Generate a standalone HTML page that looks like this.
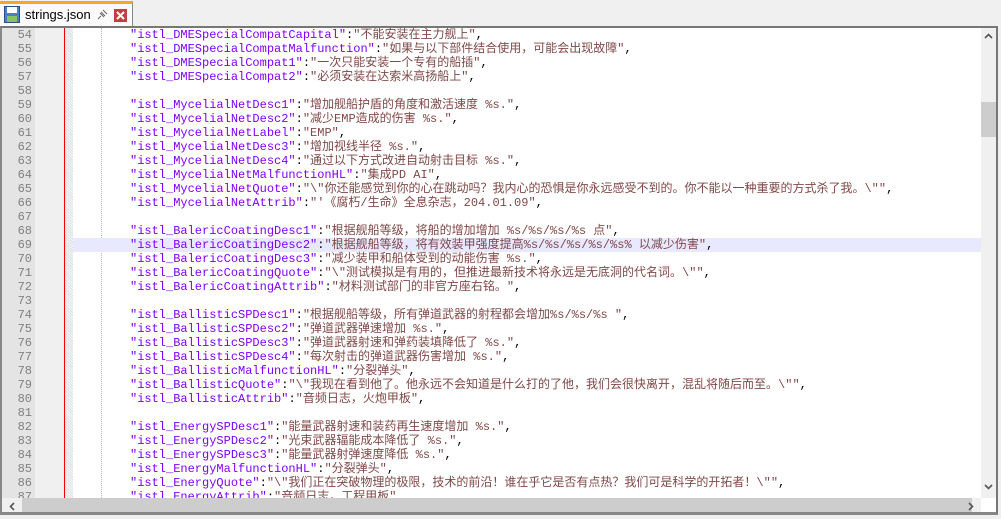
<!DOCTYPE html>
<html><head><meta charset="utf-8"><style>
body{margin:0;width:1001px;height:519px;background:#f0f0f0;overflow:hidden;position:relative;font-family:"Liberation Sans",sans-serif}
.tab{position:absolute;left:0;top:1px;width:133px;height:25px;background:#fafafa;border-right:1px solid #888;border-top:3px solid #f5a623;box-sizing:border-box}
.tab .t{position:absolute;left:25px;top:3px;font-size:13px;color:#000}
.ed{position:absolute;left:0;top:26px;width:998px;height:489px;border-top:2px solid #777;border-left:2px solid #888;border-right:2px solid #777;border-bottom:3px solid #888;box-sizing:border-box;background:#fff;overflow:hidden}
.num{position:absolute;left:0;top:0;width:33px;height:480px;background:#e4e4e4}
.num2{position:absolute;left:33px;top:0;width:29px;height:480px;background:#f0f0f0}
.red{position:absolute;left:62px;top:0;width:1px;height:480px;background:#e00}
.hatch{position:absolute;left:63px;top:0;width:8px;height:480px;background:repeating-linear-gradient(45deg,#f6f6f6 0 1px,#e0e0e0 1px 2px)}
.guide{position:absolute;left:99px;top:0;width:0;height:480px;border-left:1px dotted #bbb}
.l{position:absolute;left:0;height:14px;width:980px;font:12px/14px "Liberation Mono","Noto Sans CJK SC",monospace;white-space:pre}
.l .n{position:absolute;left:0;width:30px;text-align:right;color:#808080}
.l .c{position:absolute;left:128px}
.k{color:#8000ff}.s{color:#804848}
.hl{background:#e8e8ff}
.vs{position:absolute;left:979px;top:0;width:15px;height:470px;background:#f0f0f0}
.hs{position:absolute;left:0;top:470px;width:979px;height:16px;background:#f0f0f0}
</style></head><body>
<div class="tab"><svg style="position:absolute;left:4px;top:2px" width="16" height="17"><rect x="0.5" y="0.5" width="15" height="16" fill="#4a7fc8" stroke="#2a4f90"/><rect x="3" y="1" width="10" height="6" fill="#fff"/><rect x="3" y="10" width="10" height="6" fill="#8ac060"/></svg><span class="t">strings.json</span>
<svg style="position:absolute;left:96px;top:5px" width="12" height="12"><path d="M2 10L5 7M4 4L8 8M5 3L9 7M7 1L11 5" stroke="#666" fill="none"/></svg>
<svg style="position:absolute;left:114px;top:5px" width="13" height="13"><rect width="13" height="13" fill="#c04040"/><path d="M3 3L10 10M10 3L3 10" stroke="#fff" stroke-width="2"/></svg></div>
<div class="ed">
<div class="num"></div><div class="num2"></div><div class="red"></div><div class="hatch"></div><div class="guide"></div>
<div class="l" style="top:0"><span class="n">54</span><span class="c"><span class="k">"istl_DMESpecialCompatCapital"</span>:<span class="s">"不能安装在主力舰上"</span>,</span></div>
<div class="l" style="top:14px"><span class="n">55</span><span class="c"><span class="k">"istl_DMESpecialCompatMalfunction"</span>:<span class="s">"如果与以下部件结合使用，可能会出现故障"</span>,</span></div>
<div class="l" style="top:28px"><span class="n">56</span><span class="c"><span class="k">"istl_DMESpecialCompat1"</span>:<span class="s">"一次只能安装一个专有的船插"</span>,</span></div>
<div class="l" style="top:42px"><span class="n">57</span><span class="c"><span class="k">"istl_DMESpecialCompat2"</span>:<span class="s">"必须安装在达索米高扬船上"</span>,</span></div>
<div class="l" style="top:56px"><span class="n">58</span></div>
<div class="l" style="top:70px"><span class="n">59</span><span class="c"><span class="k">"istl_MycelialNetDesc1"</span>:<span class="s">"增加舰船护盾的角度和激活速度 %s."</span>,</span></div>
<div class="l" style="top:84px"><span class="n">60</span><span class="c"><span class="k">"istl_MycelialNetDesc2"</span>:<span class="s">"减少EMP造成的伤害 %s."</span>,</span></div>
<div class="l" style="top:98px"><span class="n">61</span><span class="c"><span class="k">"istl_MycelialNetLabel"</span>:<span class="s">"EMP"</span>,</span></div>
<div class="l" style="top:112px"><span class="n">62</span><span class="c"><span class="k">"istl_MycelialNetDesc3"</span>:<span class="s">"增加视线半径 %s."</span>,</span></div>
<div class="l" style="top:126px"><span class="n">63</span><span class="c"><span class="k">"istl_MycelialNetDesc4"</span>:<span class="s">"通过以下方式改进自动射击目标 %s."</span>,</span></div>
<div class="l" style="top:140px"><span class="n">64</span><span class="c"><span class="k">"istl_MycelialNetMalfunctionHL"</span>:<span class="s">"集成PD AI"</span>,</span></div>
<div class="l" style="top:154px"><span class="n">65</span><span class="c"><span class="k">"istl_MycelialNetQuote"</span>:<span class="s">"\"你还能感觉到你的心在跳动吗？我内心的恐惧是你永远感受不到的。你不能以一种重要的方式杀了我。\""</span>,</span></div>
<div class="l" style="top:168px"><span class="n">66</span><span class="c"><span class="k">"istl_MycelialNetAttrib"</span>:<span class="s">"'《腐朽/生命》全息杂志，204.01.09"</span>,</span></div>
<div class="l" style="top:182px"><span class="n">67</span></div>
<div class="l" style="top:196px"><span class="n">68</span><span class="c"><span class="k">"istl_BalericCoatingDesc1"</span>:<span class="s">"根据舰船等级，将船的增加增加 %s/%s/%s/%s 点"</span>,</span></div>
<div class="l hl" style="top:210px;left:71px;width:908px"></div>
<div class="l" style="top:210px"><span class="n">69</span><span class="c"><span class="k">"istl_BalericCoatingDesc2"</span>:<span class="s">"根据舰船等级，将有效装甲强度提高%s/%s/%s/%s/%s% 以减少伤害"</span>,</span></div>
<div class="l" style="top:224px"><span class="n">70</span><span class="c"><span class="k">"istl_BalericCoatingDesc3"</span>:<span class="s">"减少装甲和船体受到的动能伤害 %s."</span>,</span></div>
<div class="l" style="top:238px"><span class="n">71</span><span class="c"><span class="k">"istl_BalericCoatingQuote"</span>:<span class="s">"\"测试模拟是有用的，但推进最新技术将永远是无底洞的代名词。\""</span>,</span></div>
<div class="l" style="top:252px"><span class="n">72</span><span class="c"><span class="k">"istl_BalericCoatingAttrib"</span>:<span class="s">"材料测试部门的非官方座右铭。"</span>,</span></div>
<div class="l" style="top:266px"><span class="n">73</span></div>
<div class="l" style="top:280px"><span class="n">74</span><span class="c"><span class="k">"istl_BallisticSPDesc1"</span>:<span class="s">"根据舰船等级，所有弹道武器的射程都会增加%s/%s/%s "</span>,</span></div>
<div class="l" style="top:294px"><span class="n">75</span><span class="c"><span class="k">"istl_BallisticSPDesc2"</span>:<span class="s">"弹道武器弹速增加 %s."</span>,</span></div>
<div class="l" style="top:308px"><span class="n">76</span><span class="c"><span class="k">"istl_BallisticSPDesc3"</span>:<span class="s">"弹道武器射速和弹药装填降低了 %s."</span>,</span></div>
<div class="l" style="top:322px"><span class="n">77</span><span class="c"><span class="k">"istl_BallisticSPDesc4"</span>:<span class="s">"每次射击的弹道武器伤害增加 %s."</span>,</span></div>
<div class="l" style="top:336px"><span class="n">78</span><span class="c"><span class="k">"istl_BallisticMalfunctionHL"</span>:<span class="s">"分裂弹头"</span>,</span></div>
<div class="l" style="top:350px"><span class="n">79</span><span class="c"><span class="k">"istl_BallisticQuote"</span>:<span class="s">"\"我现在看到他了。他永远不会知道是什么打的了他，我们会很快离开，混乱将随后而至。\""</span>,</span></div>
<div class="l" style="top:364px"><span class="n">80</span><span class="c"><span class="k">"istl_BallisticAttrib"</span>:<span class="s">"音频日志，火炮甲板"</span>,</span></div>
<div class="l" style="top:378px"><span class="n">81</span></div>
<div class="l" style="top:392px"><span class="n">82</span><span class="c"><span class="k">"istl_EnergySPDesc1"</span>:<span class="s">"能量武器射速和装药再生速度增加 %s."</span>,</span></div>
<div class="l" style="top:406px"><span class="n">83</span><span class="c"><span class="k">"istl_EnergySPDesc2"</span>:<span class="s">"光束武器辐能成本降低了 %s."</span>,</span></div>
<div class="l" style="top:420px"><span class="n">84</span><span class="c"><span class="k">"istl_EnergySPDesc3"</span>:<span class="s">"能量武器射弹速度降低 %s."</span>,</span></div>
<div class="l" style="top:434px"><span class="n">85</span><span class="c"><span class="k">"istl_EnergyMalfunctionHL"</span>:<span class="s">"分裂弹头"</span>,</span></div>
<div class="l" style="top:448px"><span class="n">86</span><span class="c"><span class="k">"istl_EnergyQuote"</span>:<span class="s">"\"我们正在突破物理的极限，技术的前沿！谁在乎它是否有点热？我们可是科学的开拓者！\""</span>,</span></div>
<div class="l" style="top:462px"><span class="n">87</span><span class="c"><span class="k">"istl_EnergyAttrib"</span>:<span class="s">"音频日志，工程甲板"</span>,</span></div>
<div class="vs"><svg style="position:absolute;left:3px;top:5px" width="9" height="6"><path d="M1 5L4.5 1.5L8 5" stroke="#555" stroke-width="1.6" fill="none"/></svg><div style="position:absolute;left:0;top:74px;width:15px;height:35px;background:#cdcdcd"></div><svg style="position:absolute;left:3px;top:456px" width="9" height="6"><path d="M1 1L4.5 4.5L8 1" stroke="#555" stroke-width="1.6" fill="none"/></svg></div>
<div class="hs"><svg style="position:absolute;left:7px;top:4px" width="6" height="9"><path d="M5 1L1.5 4.5L5 8" stroke="#555" stroke-width="1.6" fill="none"/></svg><div style="position:absolute;left:20px;top:0;width:950px;height:16px;background:#cdcdcd"></div><svg style="position:absolute;left:966px;top:4px" width="6" height="9"><path d="M1 1L4.5 4.5L1 8" stroke="#555" stroke-width="1.6" fill="none"/></svg></div>
</div>
</body></html>
